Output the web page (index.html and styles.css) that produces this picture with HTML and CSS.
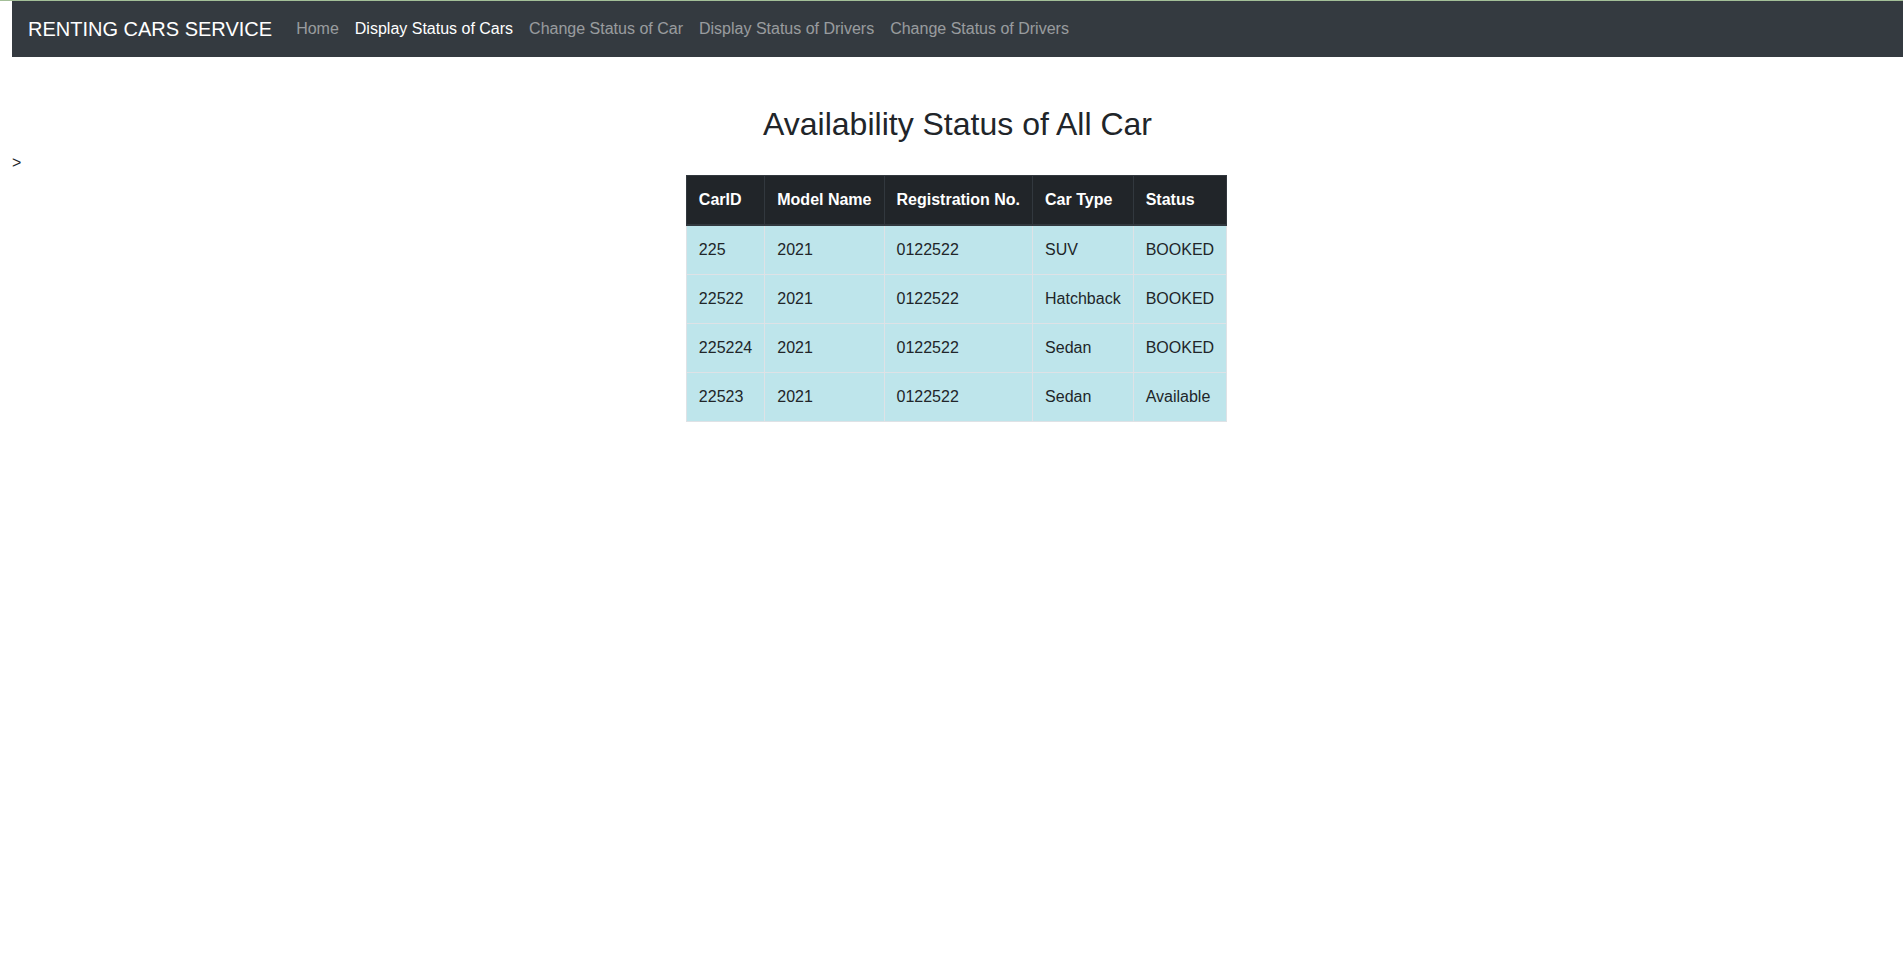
FILE: index.html
```html
<!DOCTYPE html>
<html lang="en">
<head>
<meta charset="utf-8">
<title>Renting Cars Service</title>
<link rel="stylesheet" href="styles.css">
</head>
<body>
<div class="topline"></div>
<div class="page">
  <nav class="navbar">
    <a class="brand" href="#">RENTING CARS SERVICE</a>
    <ul class="nav">
      <li><a class="nav-link" href="#">Home</a></li>
      <li><a class="nav-link active" href="#">Display Status of Cars</a></li>
      <li><a class="nav-link" href="#">Change Status of Car</a></li>
      <li><a class="nav-link" href="#">Display Status of Drivers</a></li>
      <li><a class="nav-link" href="#">Change Status of Drivers</a></li>
    </ul>
  </nav>
  <h2 class="title">Availability Status of All Car</h2>
  <div class="stray">&gt;</div>
  <div class="table-wrap">
    <table class="cars">
      <thead>
        <tr><th>CarID</th><th>Model Name</th><th>Registration No.</th><th>Car Type</th><th>Status</th></tr>
      </thead>
      <tbody>
        <tr><td>225</td><td>2021</td><td>0122522</td><td>SUV</td><td>BOOKED</td></tr>
        <tr><td>22522</td><td>2021</td><td>0122522</td><td>Hatchback</td><td>BOOKED</td></tr>
        <tr><td>225224</td><td>2021</td><td>0122522</td><td>Sedan</td><td>BOOKED</td></tr>
        <tr><td>22523</td><td>2021</td><td>0122522</td><td>Sedan</td><td>Available</td></tr>
      </tbody>
    </table>
  </div>
</div>
</body>
</html>
```
FILE: styles.css
```css
* { box-sizing: border-box; }
html, body { margin: 0; padding: 0; background: #fff; }
body {
  font-family: "Liberation Sans", Arial, sans-serif;
  font-size: 16px;
  line-height: 1.5;
  color: #212529;
}
.topline { height: 1px; background: #a3bf98; }
.page { margin-left: 12px; }
.navbar {
  display: flex;
  align-items: center;
  background: #343a40;
  padding: 8px 16px;
  height: 56px;
}
.brand {
  color: #fff;
  text-decoration: none;
  font-size: 20px;
  line-height: 30px;
  padding: 5px 0;
  margin-right: 16px;
}
.nav { display: flex; list-style: none; margin: 0; padding: 0; }
.nav-link {
  display: block;
  padding: 8px;
  color: rgba(255,255,255,.5);
  text-decoration: none;
}
.nav-link.active { color: #fff; }
.title {
  font-size: 32px;
  font-weight: 500;
  line-height: 1.2;
  text-align: center;
  margin: 48px 0 8px;
}
.stray { line-height: 24px; }
.table-wrap { margin-right: 2px; }
.cars {
  border-collapse: collapse;
  margin: 0 auto;
}
.cars th, .cars td {
  padding: 12px;
  text-align: left;
  vertical-align: top;
  white-space: nowrap;
}
.cars th {
  background: #212529;
  color: #fff;
  font-weight: 700;
  border: 1px solid #32383e;
  border-bottom-width: 2px;
}
.cars td {
  background: #bee5eb;
  border: 1px solid #dee2e6;
}
```
